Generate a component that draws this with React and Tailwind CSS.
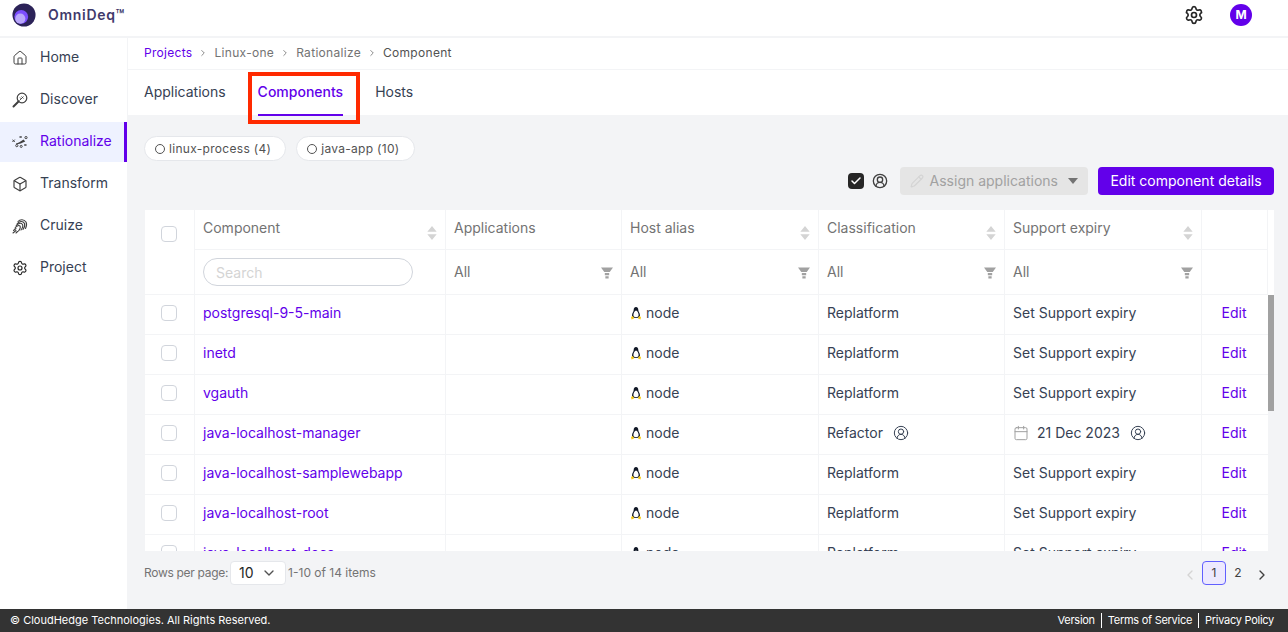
import React from 'react';
import { Home, Settings, Box, ChevronDown, ChevronLeft, ChevronRight, Check, CircleUserRound, Calendar, Pencil } from 'lucide-react';

const gridCols = 'grid grid-cols-[50px_251px_176px_197px_186px_197px_66px]';

const DiscoverIcon = () => (
  <svg viewBox="0 0 16 16" className="w-4 h-4 text-neutral-700" fill="none" stroke="currentColor" strokeWidth="1.2">
    <circle cx="10" cy="6" r="4.8" />
    <path d="M7.500 8.500 11.500 4.500M8 5.500l1.500 1.500M9.500 4.500l2 2" strokeWidth="0.9" />
    <path d="M6.500 9.500 1.500 14.500" strokeWidth="2" strokeLinecap="round" />
  </svg>
);

const RationalizeIcon = () => (
  <svg viewBox="0 0 20 16" className="w-5 h-4 text-neutral-700" fill="none" stroke="currentColor" strokeWidth="1.2">
    <path d="M0.500 5l3 3M3.500 5l-3 3M9.500 0.500l2.500 2.500M12 0.500 9.500 3M15.500 10.500l2.500 2.500M18 10.500l-2.500 2.500" />
    <circle cx="17.500" cy="2.500" r="1.400" />
    <circle cx="6" cy="12.500" r="1.400" />
    <circle cx="11.500" cy="13.500" r="1.300" />
    <path d="M5 10c3-.5 5-2 9.500-5l2 2.500c-4 2-7 3.500-11.500 3.500z" fill="currentColor" stroke="none" />
  </svg>
);

const CruizeIcon = () => (
  <svg viewBox="0 0 16 16" className="w-4 h-4 text-neutral-700" fill="none" stroke="currentColor" strokeWidth="1.1" strokeLinecap="round">
    <path d="M6 3.500c2-2.500 6-2.500 8 .5 1 2 .5 4.500-.5 6.500" />
    <path d="M5 6c2-3 6-3.500 7.500-.5.700 2 0 4-1.500 6" />
    <path d="M4 8c2-3 5-3.500 6.500-1.500.700 1.500 0 3.500-1.500 5.500" />
    <path d="M3 10c2-2.500 4-3 5-2 .700 1 0 3-1.500 5" />
    <path d="M1.500 12.500 4 10.500M1 15l3-2.500M4 15l1.500-1.500" />
  </svg>
);

const Penguin = () => (
  <svg viewBox="0 0 12 14" className="w-3 h-3.5 shrink-0">
    <path d="M6 1C4.300 1 3.700 2.400 3.700 4c0 1.500-1.700 3-1.700 5.500C2 11 3 12 6 12s4-1 4-2.500C10 7 8.300 5.500 8.300 4 8.300 2.400 7.700 1 6 1z" fill="#111827" />
    <path d="M6 4.500c-1.200 0-2.600 2.500-2.600 4.500 0 1.500 1.200 2.200 2.600 2.200S8.600 10.500 8.600 9C8.600 7 7.200 4.500 6 4.500z" fill="#fff" />
    <path d="M1 11l2-1 1 2.500-2.500 1zM11 11l-2-1-1 2.500 2.500 1z" fill="#facc15" />
  </svg>
);

const SortIcon = () => (
  <svg viewBox="0 0 8 12" className="mt-1.5 w-2.5 h-3.5 text-neutral-300" fill="currentColor">
    <path d="M4 0l4 5H0zM0 7h8l-4 5z" />
  </svg>
);

const FunnelIcon = () => (
  <svg viewBox="0 0 11 10" className="mt-0.5 w-3 h-3 text-neutral-400" fill="currentColor">
    <path d="M0 0h11L8 4H3zM3.500 5h4v2h-4zM4 8h3v2H4z" />
  </svg>
);

const navItems = [
  { label: 'Home', icon: <Home className="w-4 h-4 text-neutral-700" strokeWidth={1.5} /> },
  { label: 'Discover', icon: <DiscoverIcon /> },
  { label: 'Rationalize', icon: <RationalizeIcon />, active: true },
  { label: 'Transform', icon: <Box className="w-4 h-4 text-neutral-700" strokeWidth={1.75} /> },
  { label: 'Cruize', icon: <CruizeIcon /> },
  { label: 'Project', icon: <Settings className="w-4 h-4 text-neutral-800" strokeWidth={1.75} /> },
];

const rows = [
  { name: 'postgresql-9-5-main' },
  { name: 'inetd' },
  { name: 'vgauth' },
  { name: 'java-localhost-manager', type: 'Refactor', date: '21 Dec 2023' },
  { name: 'java-localhost-samplewebapp' },
  { name: 'java-localhost-root' },
  { name: 'java-localhost-docs' },
];

const headers = [
  { label: 'Component', sort: true },
  { label: 'Applications' },
  { label: 'Host alias', sort: true },
  { label: 'Classification', sort: true },
  { label: 'Support expiry', sort: true },
];

const Checkbox = () => <span className="w-4 h-4 border border-gray-300 rounded-sm bg-white" />;

const App = () => {
  return (
    <div className="h-screen flex flex-col overflow-hidden bg-white text-sm text-gray-700" style={{ fontFamily: 'Inter, "Liberation Sans", sans-serif' }}>
      <header className="h-9.5 shrink-0 flex items-center border-b-2 border-gray-100 pl-3 pr-9 pb-1.5">
        <svg viewBox="0 0 26 26" className="w-6 h-6">
          <circle cx="13" cy="13" r="12.500" fill="#2c2358" />
          <circle cx="10" cy="15" r="7.500" fill="#7c4dff" />
          <circle cx="9" cy="17" r="5.500" fill="#b9a7fb" />
        </svg>
        <span className="ml-3 font-semibold text-sm text-[#3f3a6b] tracking-wider">OmniDeq™</span>
        <Settings className="ml-auto w-5 h-5 text-neutral-800" />
        <span className="ml-6.5 w-5.5 h-5.5 rounded-full bg-[#6200ea] text-white text-xs font-bold flex items-center justify-center">M</span>
      </header>

      <div className="flex-1 min-h-0 flex">
        <nav className="w-32 shrink-0 flex flex-col">
          <div className="flex flex-col gap-0.5 border-r border-gray-100">
            {navItems.map((item) => (
              <div key={item.label} className={`h-10 flex items-center gap-3 pl-3 ${item.active ? 'bg-indigo-50 text-[#6200ea] border-r-3 border-[#6200ea]' : 'text-gray-700'}`}>
                <span className="w-4 flex justify-center">{item.icon}</span>
                <span className="pb-0.5">{item.label}</span>
              </div>
            ))}
          </div>
        </nav>

        <main className="flex-1 min-w-0 flex flex-col border-l border-gray-100 -ml-px">
          <div className="h-8 shrink-0 flex items-center gap-1.5 px-4 pb-0.5 text-xs tracking-wide border-b border-gray-100 text-neutral-500">
            <span className="text-[#6200ea]">Projects</span>
            <ChevronRight className="w-2.5 h-2.5" />
            <span>Linux-one</span>
            <ChevronRight className="w-2.5 h-2.5" />
            <span>Rationalize</span>
            <ChevronRight className="w-2.5 h-2.5" />
            <span className="text-neutral-600">Component</span>
          </div>

          <div className="relative h-11.5 shrink-0 flex items-start gap-8 px-4 border-b border-gray-100">
            <span className="pt-3">Applications</span>
            <span className="pt-3 h-11.5 font-medium text-[#6200ea] border-b-2 border-[#6200ea]">Components</span>
            <span className="pt-3">Hosts</span>
            <span className="absolute left-30 top-0.5 w-28 h-13 border-4 border-[#ff2a00]" />
          </div>

          <div className="flex-1 min-h-0 flex flex-col bg-gray-100 pl-4 pr-3.5 pt-5">
            <div className="flex gap-2.5 text-xs tracking-wide text-neutral-600">
              <span className="h-6.25 flex items-center gap-1 pl-2.5 pr-3.5 rounded-full border border-gray-200 bg-white"><span className="w-2.5 h-2.5 rounded-full border border-neutral-600" />linux-process (4)</span>
              <span className="h-6.25 flex items-center gap-1 pl-2.5 pr-3.5 rounded-full border border-gray-200 bg-white"><span className="w-2.5 h-2.5 rounded-full border border-neutral-600" />java-app (10)</span>
            </div>

            <div className="mt-1.5 flex items-center justify-end">
              <span className="w-4 h-4 rounded-sm bg-neutral-800 flex items-center justify-center"><Check className="w-3 h-3 text-white" strokeWidth={3} /></span>
              <CircleUserRound className="ml-2 w-4 h-4 text-neutral-700" />
              <button className="ml-3 h-7 px-2.5 flex items-center gap-1.5 rounded bg-neutral-200 text-neutral-400">
                <Pencil className="w-3.5 h-3.5 text-neutral-300" />
                Assign applications
                <svg viewBox="0 0 10 6" className="ml-1 w-2.5 h-1.5 text-neutral-500" fill="currentColor"><path d="M0 0h10L5 6z" /></svg>
              </button>
              <button className="ml-2.5 h-7 w-44 rounded bg-[#6200ea] text-white">Edit component details</button>
            </div>

            <div className="mt-3.5 flex-1 min-h-0 flex flex-col bg-white border-t border-l border-gray-100 overflow-hidden">
              <div className={`${gridCols} shrink-0 text-neutral-500`}>
                <div className="row-span-2 flex justify-center pt-4 pr-0.5 border-r border-b border-gray-100"><Checkbox /></div>
                {headers.map((h) => (
                  <div key={h.label} className="h-10 flex items-center justify-between pl-2 pr-2 border-r border-b border-gray-100">
                    <span className="pb-1">{h.label}</span>
                    {h.sort && <SortIcon />}
                  </div>
                ))}
                <div className="h-10 border-r border-b border-gray-100" />
                <div className="h-11.25 flex items-center pl-2 pr-8 border-r border-b border-gray-100">
                  <input placeholder="Search" className="w-full h-7 px-3 rounded-full border border-gray-300 placeholder:text-neutral-300" />
                </div>
                {headers.slice(1).map((h) => (
                  <div key={h.label} className="h-11.25 flex items-center justify-between pl-2 pr-2 border-r border-b border-gray-100">
                    All
                    <FunnelIcon />
                  </div>
                ))}
                <div className="h-11.25 border-r border-b border-gray-100" />
              </div>

              <div className="flex-1 min-h-0 flex">
                <div className="w-full">
                  {rows.map((row) => (
                    <div key={row.name} className={`${gridCols} h-10 text-gray-700`}>
                      <div className="flex items-center justify-center pr-0.5 pb-1 border-r border-b border-gray-100"><Checkbox /></div>
                      <div className="flex items-center px-2 pb-1 text-[#6200ea] border-r border-b border-gray-100">{row.name}</div>
                      <div className="border-r border-b border-gray-100" />
                      <div className="flex items-center gap-1 px-2 pb-1 border-r border-b border-gray-100"><Penguin />node</div>
                      <div className="flex items-center gap-2.5 px-2 pb-1 border-r border-b border-gray-100">
                        {row.type || 'Replatform'}
                        {row.type && <CircleUserRound className="w-4 h-4" strokeWidth={1.5} />}
                      </div>
                      <div className="flex items-center px-2 pb-1 border-r border-b border-gray-100">
                        {row.date ? (
                          <>
                            <Calendar className="w-4 h-4 text-neutral-400" strokeWidth={1.5} />
                            <span className="ml-2">{row.date}</span>
                            <CircleUserRound className="ml-2.5 w-4 h-4" strokeWidth={1.5} />
                          </>
                        ) : 'Set Support expiry'}
                      </div>
                      <div className="flex items-center justify-center pr-0.5 pb-1 text-[#6200ea] border-b border-gray-100">Edit</div>
                    </div>
                  ))}
                </div>
                <div className="w-2 shrink-0 bg-gray-100">
                  <div className="h-29 bg-neutral-400" />
                </div>
              </div>
            </div>

            <div className="shrink-0 flex pt-2.5 pb-6 text-xs text-neutral-500">
              <div className="flex items-center gap-0.5">
                <span className="tracking-tight">Rows per page:</span>
                <span className="w-14 h-6 flex items-center justify-between px-2 bg-white border border-gray-200 rounded-sm text-sm text-neutral-800">
                  10
                  <ChevronDown className="w-4 h-4 text-neutral-600" />
                </span>
                1-10 of 14 items
              </div>
              <div className="ml-auto flex items-center gap-1 text-neutral-700">
                <ChevronLeft className="mt-1 w-4 h-4 text-neutral-300" />
                <div className="flex">
                  <span className="w-6 h-6 flex items-center justify-center rounded bg-violet-100 border border-indigo-500">1</span>
                  <span className="w-6 h-6 flex items-center justify-center">2</span>
                </div>
                <ChevronRight className="mt-1 w-4 h-4 mr-1" />
              </div>
            </div>
          </div>
        </main>
      </div>

      <footer className="h-5.75 shrink-0 flex items-center justify-between pl-2.5 pr-3.5 bg-[#333333] text-white text-[11px]">
        <span>© CloudHedge Technologies. All Rights Reserved.</span>
        <div className="flex items-center tracking-tight">
          <span className="pr-1.5 border-r border-white">Version</span>
          <span className="px-1.5 border-r border-white">Terms of Service</span>
          <span className="pl-1.5">Privacy Policy</span>
        </div>
      </footer>
    </div>
  );
};

export default App;
